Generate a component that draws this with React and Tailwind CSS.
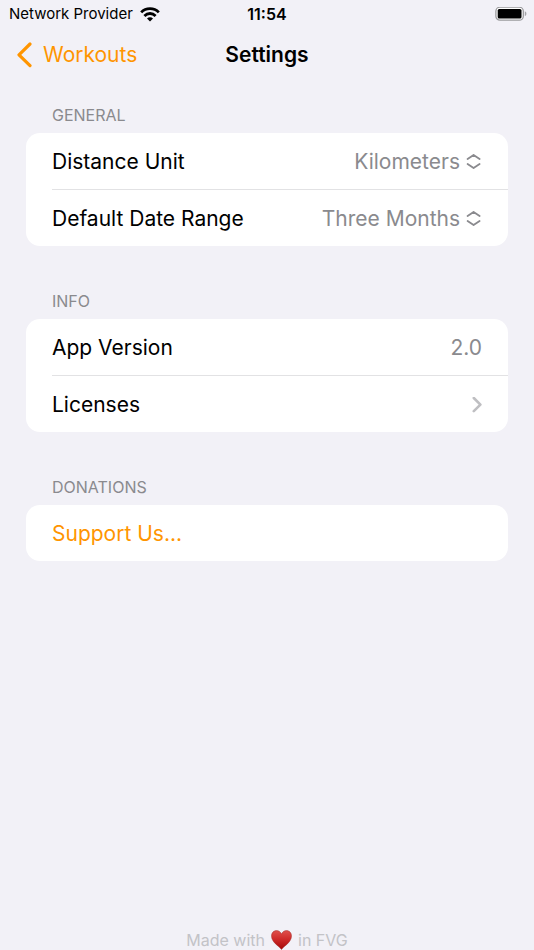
import React, { useState } from 'react'

const WifiIcon = () => (
    <svg width="20" height="15" viewBox="0 0 20 15" fill="none" stroke="#000" strokeWidth="2.8" aria-hidden="true">
        <path d="M1.200 5.400C3.500 3 6.600 1.700 10 1.700s6.500 1.300 8.800 3.700" />
        <path d="M4.400 8.900C5.900 7.400 7.850 6.500 10 6.500s4.100.900 5.600 2.400" />
        <path d="M10 14.400 7 11.400C7.800 10.600 8.800 10.200 10 10.200s2.200.400 3 1.200Z" fill="#000" stroke="none" />
    </svg>
)

const BatteryIcon = () => (
    <svg width="32" height="15" viewBox="0 0 32 15" aria-hidden="true">
        <rect x="0.9" y="0.2" width="27.4" height="13" rx="4" fill="#fff" stroke="#99999c" strokeWidth="1.3" />
        <rect x="2.7" y="1.900" width="23.8" height="9.6" rx="1.500" fill="#000" />
        <path d="M29.800 4.300v4.800c1-.4 1.600-1.300 1.600-2.400S30.800 4.700 29.800 4.300Z" fill="#a3a3a7" />
    </svg>
)

const BackIcon = () => (
    <svg width="16" height="26" viewBox="0 0 16 26" fill="none" stroke="#ff9500" strokeWidth="3.2" strokeLinecap="round" strokeLinejoin="round" aria-hidden="true">
        <path d="M14 2 3 12.800 14 23.600" />
    </svg>
)

const UpDownIcon = () => (
    <svg width="16" height="16" viewBox="0 1 16 16" fill="none" stroke="#8a8a8e" strokeWidth="1.8" strokeLinecap="round" strokeLinejoin="round" aria-hidden="true">
        <path d="M1.600 6 7.600 1.900l6 4.100" />
        <path d="m1.600 11 6 4.100 6-4.100" />
    </svg>
)

const ChevronIcon = () => (
    <svg width="10" height="16" viewBox="0 1 10 16" fill="none" stroke="#bfbfc2" strokeWidth="2.600" strokeLinecap="round" strokeLinejoin="round" aria-hidden="true">
        <path d="m1.800 2 6.600 6.600-6.600 6.600" />
    </svg>
)

const HeartIcon = () => (
    <svg width="21" height="20" viewBox="0 0 21 20" role="img" aria-label="love">
        <defs>
            <linearGradient id="heart" x1="0" y1="0" x2="0" y2="1">
                <stop offset="0" stopColor="#e0504c" />
                <stop offset="0.45" stopColor="#cf2b2a" />
                <stop offset="1" stopColor="#a30808" />
            </linearGradient>
        </defs>
        <path
            d="M10.500 19.500C8 15.900 0.500 12.400 0.500 5.900 0.500 2.800 2.700.600 5.500.600c2.300 0 4.100 1.300 5 3.500.900-2.200 2.700-3.500 5-3.500 2.800 0 5 2.200 5 5.300 0 6.500-7.500 10-10 13.600Z"
            fill="url(#heart)"
            stroke="#a5302f"
            strokeWidth="0.5"
        />
    </svg>
)

const Section = ({ title, children }) => (
    <section>
        <h2 className="px-[26px] mb-1.5 text-base leading-6 text-[#8a8a8e] uppercase">{title}</h2>
        <div className="bg-white rounded-[14px] overflow-hidden">{children}</div>
    </section>
)

const Divider = () => <div className="h-px ml-[26px] bg-[#e2e2e4]"></div>

const SelectRow = ({ id, label, value, options, onChange }) => (
    <div className="flex items-center justify-between h-14 px-[26px] pt-0.5">
        <label htmlFor={id}>{label}</label>
        <div className="flex items-center gap-1.5">
            <select
                id={id}
                value={value}
                onChange={(e) => onChange(e.target.value)}
                className="appearance-none field-sizing-content bg-transparent text-right text-[#8a8a8e] focus:outline-none"
            >
                {options.map((option) => (
                    <option key={option}>{option}</option>
                ))}
            </select>
            <UpDownIcon />
        </div>
    </div>
)

const App = () => {
    const [unit, setUnit] = useState('Kilometers')
    const [range, setRange] = useState('Three Months')

    return (
        <div className="flex flex-col min-h-screen bg-[#f2f1f7] font-['Inter',sans-serif] text-[21px] leading-7 text-black">
            {/* Status bar */}
            <div className="grid grid-cols-[1fr_auto_1fr] items-center h-7 px-[7px] text-[15px] leading-5">
                <div className="flex items-center gap-[7px] pl-0.5">
                    <span>Network Provider</span>
                    <WifiIcon />
                </div>
                <span className="text-base leading-5 font-semibold">11:54</span>
                <div className="flex justify-end">
                    <BatteryIcon />
                </div>
            </div>

            {/* Navigation */}
            <header className="grid grid-cols-[1fr_auto_1fr] items-center h-[54px] px-4">
                <a href="#workouts" className="flex items-center gap-[11px] text-[#ff9500]">
                    <BackIcon />
                    Workouts
                </a>
                <h1 className="font-semibold">Settings</h1>
            </header>

            <main className="flex flex-col flex-1 gap-[43px] px-[26px] pt-[21px]">
                <Section title="General">
                    <SelectRow
                        id="distance-unit"
                        label="Distance Unit"
                        value={unit}
                        options={['Kilometers', 'Miles']}
                        onChange={setUnit}
                    />
                    <Divider />
                    <SelectRow
                        id="date-range"
                        label="Default Date Range"
                        value={range}
                        options={['One Month', 'Three Months', 'Six Months', 'One Year']}
                        onChange={setRange}
                    />
                </Section>

                <Section title="Info">
                    <div className="flex items-center justify-between h-14 px-[26px] pt-0.5">
                        <span>App Version</span>
                        <span className="text-[#8a8a8e]">2.0</span>
                    </div>
                    <Divider />
                    <a href="#licenses" className="flex items-center justify-between h-14 px-[26px] pt-0.5">
                        Licenses
                        <ChevronIcon />
                    </a>
                </Section>

                <Section title="Donations">
                    <button type="button" className="flex items-center w-full h-14 px-[26px] pt-0.5 text-[#ff9500]">
                        Support Us...
                    </button>
                </Section>
            </main>

            <footer className="flex items-center justify-center gap-1.5 text-base leading-5 text-[#c3c3c7]">
                <span>Made with</span>
                <HeartIcon />
                <span>in FVG</span>
            </footer>
        </div>
    )
}

export default App
